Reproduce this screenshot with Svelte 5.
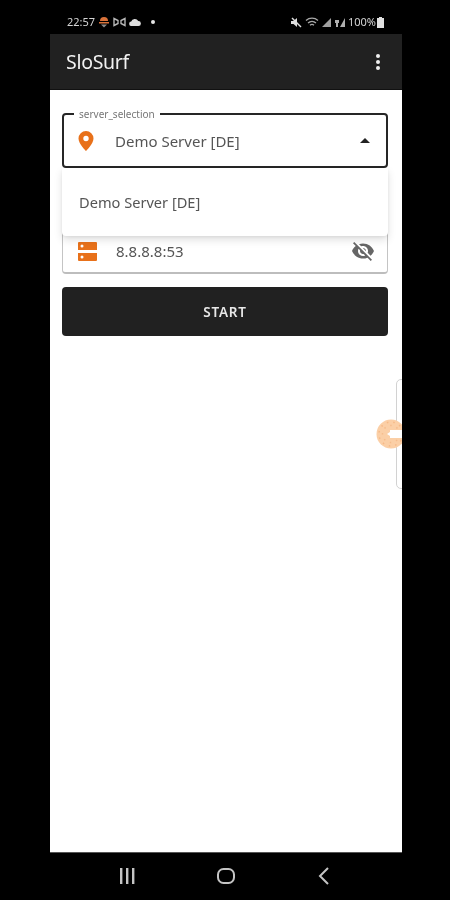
<script>
	let server = "Demo Server [DE]";
	let dns = "8.8.8.8:53";
	let label = "server_selection";
</script>

<style>
	:global(body) {
		margin: 0;
		background: #000;
	}

	* {
		box-sizing: border-box;
	}

	#screen {
		position: relative;
		width: 450px;
		height: 900px;
		overflow: hidden;
		padding-left: 50px;
		background: #000;
		font-family: "Noto Sans", "Open Sans", sans-serif;
	}

	.phone {
		width: 352px;
		height: 900px;
		display: flex;
		flex-direction: column;
	}

	.status {
		height: 34px;
		flex: none;
		display: flex;
		align-items: flex-end;
		justify-content: space-between;
		padding: 0 18px 5px 17px;
		color: #d4d4d4;
		font-size: 11px;
		line-height: 14px;
		filter: blur(0.5px);
	}

	.status_group {
		display: flex;
		align-items: center;
		gap: 3px;
	}

	.status svg {
		display: block;
	}

	.appbar {
		height: 56px;
		flex: none;
		display: flex;
		align-items: center;
		justify-content: space-between;
		padding: 0 21px 0 16px;
		background: #212121;
		border-bottom: 1px solid #111;
		color: #f2f2f2;
	}

	.appbar h1 {
		margin: 0;
		font-size: 19.5px;
		font-weight: 400;
		letter-spacing: -0.3px;
		filter: blur(0.5px);
	}

	.content {
		flex: 1;
		background: #fff;
		padding: 23px 14px 0 12px;
		position: relative;
	}

	.field {
		position: relative;
		height: 55px;
		border-radius: 4px;
		display: flex;
		align-items: center;
		color: #555;
		font-size: 15px;
	}

	.field span,
	.field svg,
	.legend,
	.menu span,
	.start {
		filter: blur(0.45px);
	}

	.select {
		border: 2px solid #262626;
		padding: 0 16px 0 14px;
	}

	.legend {
		position: absolute;
		top: -7px;
		left: 10px;
		padding: 0 5px;
		background: #fff;
		color: #777;
		font-size: 10px;
		line-height: 12px;
	}

	.select .value {
		flex: 1;
		margin-left: 21px;
	}

	.dns {
		margin-top: 51px;
		border: 1px solid #c4c4c4;
		border-bottom: 2px solid #bdbdbd;
		padding: 10px 12px 0 15px;
	}

	.dns .value {
		flex: 1;
		margin-left: 19px;
		font-size: 15px;
	}

	.menu {
		position: absolute;
		top: 78px;
		left: 12px;
		width: 326px;
		height: 68px;
		display: flex;
		align-items: center;
		padding-left: 17px;
		background: #fff;
		border-radius: 0 0 4px 4px;
		box-shadow: 0 4px 8px rgba(0, 0, 0, 0.12), 0 1px 3px rgba(0, 0, 0, 0.06);
		color: #555;
		font-size: 14.600px;
		z-index: 2;
	}

	.start {
		display: block;
		width: 100%;
		height: 49px;
		margin-top: 13px;
		border: none;
		border-radius: 4px;
		background: #212121;
		color: #e8e8e8;
		font-family: inherit;
		font-size: 13.500px;
		font-weight: 600;
		letter-spacing: 0.8px;
	}

	.navbar {
		height: 48px;
		flex: none;
		display: flex;
		align-items: center;
		padding-bottom: 1px;
		border-top: 1px solid #555;
	}

	.navbar svg {
		display: block;
		position: absolute;
		filter: blur(0.4px);
	}

	.handle {
		position: absolute;
		top: 379px;
		left: 396px;
		width: 10px;
		height: 110px;
		border: 1px solid #d2d2d2;
		border-radius: 5px 0 0 5px;
		background: #fff;
	}

	.bubble {
		position: absolute;
		top: 417px;
		left: 376px;
		width: 26px;
		height: 34px;
		overflow: hidden;
		filter: blur(0.5px);
	}

	.bubble svg {
		display: block;
	}

	.edge {
		position: absolute;
		top: 0;
		left: 402px;
		width: 48px;
		height: 900px;
		background: #000;
	}
</style>

<div id="screen">
	<div class="phone">
		<div class="status">
			<div class="status_group">
				<span>22:57</span>
				<svg width="12" height="12" viewBox="0 0 12 12">
					<path d="M2 5a4 4 0 0 1 8 0z" fill="#d9723a" />
					<rect x="1" y="6" width="10" height="1.5" fill="#d9723a" />
					<path d="M3 8.5h6L6 11.5z" fill="#8a8a8a" />
				</svg>
				<svg width="13" height="10" viewBox="0 0 13 10" fill="none" stroke="#b5b5b5" stroke-width="1.4">
					<path d="M1 1.5v7l4-2v-3zM12 1.5v7l-4-2v-3z" />
				</svg>
				<svg width="12" height="8" viewBox="0 0 12 8">
					<path d="M2.5 8a2.2 2.2 0 0 1-.3-4.4A3.8 3.8 0 0 1 9.2 3 2.5 2.5 0 0 1 9.5 8z" fill="#dedede" />
				</svg>
				<svg style="margin-left:7px" width="4" height="4" viewBox="0 0 4 4">
					<circle cx="2" cy="2" r="2" fill="#e6e6e6" />
				</svg>
			</div>
			<div class="status_group">
				<svg width="12" height="11" viewBox="0 0 12 11">
					<path d="M1 4h2.5L7 1v9L3.500 7H1z" fill="#dedede" />
					<path d="M2 1l9 9" stroke="#dedede" stroke-width="1.4" />
				</svg>
				<svg width="14" height="11" viewBox="0 0 14 11" fill="none" stroke="#a8a8a8" stroke-width="1.3">
					<path d="M1 3.500a9 9 0 0 1 12 0M3 6a6 6 0 0 1 8 0M5 8.200a3 3 0 0 1 4 0" />
				</svg>
				<svg width="10" height="10" viewBox="0 0 10 10">
					<path d="M0 10L9 1v9z" fill="#a0a0a0" />
				</svg>
				<svg width="10" height="10" viewBox="0 0 10 10">
					<path d="M0 3h4v3H3v4H1V6H0zM5 10L10 1v9z" fill="#b0b0b0" />
				</svg>
				<span>100%</span>
				<svg style="margin-left:-2px" width="7" height="11" viewBox="0 0 7 11">
					<path d="M2 0h3v1h2v10H0V1h2z" fill="#e0e0e0" />
				</svg>
			</div>
		</div>

		<header class="appbar">
			<h1>SloSurf</h1>
			<svg width="6" height="18" viewBox="0 0 6 18" fill="#f0f0f0">
				<circle cx="3" cy="3" r="2" />
				<circle cx="3" cy="9" r="2" />
				<circle cx="3" cy="15" r="2" />
			</svg>
		</header>

		<main class="content">
			<div class="field select">
				<div class="legend">{label}</div>
				<svg width="16" height="20" viewBox="0 0 16 20">
					<path d="M8 0a7.500 7.500 0 0 0-7.500 7.500C.5 13 8 20 8 20s7.500-7 7.500-12.500A7.500 7.500 0 0 0 8 0zm0 10.200a2.700 2.700 0 1 1 0-5.400 2.700 2.700 0 0 1 0 5.400z" fill="#e8711a" />
				</svg>
				<span class="value">{server}</span>
				<svg width="10" height="5" viewBox="0 0 10 5">
					<path d="M0 5l5-5 5 5z" fill="#222" />
				</svg>
			</div>

			<div class="menu"><span>{server}</span></div>

			<div class="field dns">
				<svg width="19" height="19" viewBox="0 0 19 19">
					<path d="M1 0h17a1 1 0 0 1 1 1v7H0V1a1 1 0 0 1 1-1zm3 2.500a1.500 1.500 0 1 0 0 3 1.500 1.500 0 0 0 0-3zM0 11h19v7a1 1 0 0 1-1 1H1a1 1 0 0 1-1-1zm4 2.500a1.500 1.500 0 1 0 0 3 1.500 1.500 0 0 0 0-3z" fill="#e8711a" fill-rule="evenodd" />
				</svg>
				<span class="value">{dns}</span>
				<svg width="24" height="24" viewBox="0 0 24 24">
					<path d="M12 7c2.760 0 5 2.240 5 5 0 .65-.13 1.260-.36 1.830l2.920 2.920c1.510-1.260 2.700-2.890 3.430-4.750-1.730-4.390-6-7.500-11-7.500-1.400 0-2.740.25-3.980.7l2.160 2.160C10.740 7.130 11.350 7 12 7zM2 4.270l2.280 2.280.46.46C3.080 8.300 1.780 10.020 1 12c1.730 4.390 6 7.500 11 7.500 1.550 0 3.030-.3 4.380-.84l.42.42L19.730 22 21 20.730 3.270 3 2 4.270zM7.530 9.800l1.550 1.550c-.05.21-.08.430-.08.650 0 1.660 1.340 3 3 3 .22 0 .44-.03.65-.08l1.550 1.550c-.67.330-1.410.53-2.200.53-2.760 0-5-2.240-5-5 0-.79.2-1.530.53-2.200zm4.310-.78l3.150 3.150.02-.16c0-1.660-1.340-3-3-3l-.17.010z" fill="#666" />
				</svg>
			</div>

			<button class="start">START</button>
		</main>

		<nav class="navbar">
			<svg style="left:120px;top:868px" width="15" height="16" viewBox="0 0 15 16" fill="#c4c4c4">
				<rect x="0" y="0" width="2.400" height="16" />
				<rect x="6" y="0" width="2.400" height="16" />
				<rect x="12" y="0" width="2.400" height="16" />
			</svg>
			<svg style="left:217px;top:867px" width="18" height="18" viewBox="0 0 18 18" fill="none" stroke="#c4c4c4" stroke-width="2">
				<rect x="1" y="2" width="16" height="14" rx="5.500" />
			</svg>
			<svg style="left:318px;top:867px" width="12" height="18" viewBox="0 0 12 18" fill="none" stroke="#c4c4c4" stroke-width="2">
				<path d="M10 1L2 9l8 8" />
			</svg>
		</nav>
	</div>

	<div class="handle"></div>
	<div class="bubble">
		<svg width="34" height="34" viewBox="0 0 34 34">
			<circle cx="15" cy="17" r="14.500" fill="#fbcfa6" />
			<circle cx="15" cy="17" r="12" fill="none" stroke="#f6b987" stroke-width="1.500" stroke-dasharray="1.500 5" />
			<circle cx="15" cy="17" r="8.500" fill="none" stroke="#f6bc8c" stroke-width="1.500" stroke-dasharray="1.500 5" />
			<path d="M14 13h12v8H14z" fill="#fff" />
			<path d="M14 15l-3 2 3 2z" fill="#fff" />
		</svg>
	</div>
	<div class="edge"></div>
</div>
